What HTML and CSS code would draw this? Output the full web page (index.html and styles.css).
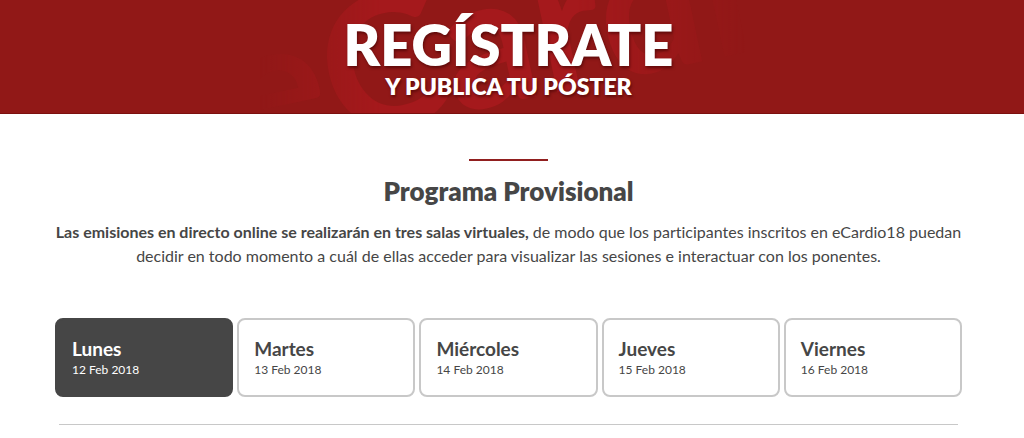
FILE: index.html
```html
<!DOCTYPE html>
<html lang="es">
<head>
<meta charset="utf-8">
<meta name="viewport" content="width=device-width, initial-scale=1">
<title>eCardio18 - Programa Provisional</title>
<link rel="stylesheet" href="styles.css">
</head>
<body>
<a class="banner" href="#registro">
  <svg class="banner-art" viewBox="0 0 1024 114" preserveAspectRatio="xMidYMid slice" aria-hidden="true">
    <defs>
      <linearGradient id="shade" x1="260" x2="745" y1="0" y2="0" gradientUnits="userSpaceOnUse">
        <stop offset="0" stop-color="#000"/>
        <stop offset=".12" stop-color="#777"/>
        <stop offset=".25" stop-color="#fff"/>
        <stop offset=".65" stop-color="#fff"/>
        <stop offset="1" stop-color="#000"/>
      </linearGradient>
      <mask id="reveal" maskUnits="userSpaceOnUse" x="0" y="0" width="1024" height="114">
        <rect width="1024" height="114" fill="url(#shade)"/>
      </mask>
    </defs>
    <g mask="url(#reveal)"><text class="banner-mark" transform="translate(240 160) rotate(-12)">eCardio</text></g>
  </svg>
  <span class="banner-title">REGÍSTRATE</span>
  <span class="banner-subtitle">Y PUBLICA TU PÓSTER</span>
</a>
<main class="program">
  <h1 class="program-title">Programa Provisional</h1>
  <p class="program-intro"><strong>Las emisiones en directo online se realizarán en tres salas virtuales,</strong> de modo que los participantes inscritos en eCardio18 puedan decidir en todo momento a cuál de ellas acceder para visualizar las sesiones e interactuar con los ponentes.</p>
  <nav class="days" aria-label="Días del programa">
    <button class="day day-active" type="button"><span class="day-name">Lunes</span><span class="day-date">12 Feb 2018</span></button>
    <button class="day" type="button"><span class="day-name">Martes</span><span class="day-date">13 Feb 2018</span></button>
    <button class="day" type="button"><span class="day-name">Miércoles</span><span class="day-date">14 Feb 2018</span></button>
    <button class="day" type="button"><span class="day-name">Jueves</span><span class="day-date">15 Feb 2018</span></button>
    <button class="day" type="button"><span class="day-name">Viernes</span><span class="day-date">16 Feb 2018</span></button>
  </nav>
  <hr class="divider">
</main>
</body>
</html>
```
FILE: styles.css
```css
* {
  box-sizing: border-box;
}

body {
  margin: 0;
  background: #fff;
  color: #464646;
  font-family: Lato, "Open Sans", sans-serif;
  font-variant-ligatures: none;
}

.banner {
  position: relative;
  display: flex;
  flex-direction: column;
  align-items: center;
  padding: 16px 7px 14px 0;
  overflow: hidden;
  background: #911817;
  border-bottom: 1px solid #7c100f;
  color: #fff;
  font-weight: 800;
  text-decoration: none;
  text-shadow: 1px 2px 3px rgba(60, 0, 0, 0.6);
}

.banner-art {
  position: absolute;
  inset: 0;
  width: 100%;
  height: 100%;
}

.banner-mark {
  fill: #a5191c;
  font-size: 184px;
  font-weight: 700;
  text-shadow: none;
}

.banner-title,
.banner-subtitle {
  position: relative;
}

.banner-title {
  font-size: 56px;
  line-height: 57px;
}

.banner-subtitle {
  font-size: 23px;
  line-height: 26px;
}

.program {
  padding: 45px 62px 0 55px;
}

.program-title {
  margin: 0;
  font-size: 26px;
  font-weight: 800;
  line-height: 32px;
  text-align: center;
}

.program-title::before {
  content: "";
  display: block;
  width: 79px;
  height: 2px;
  margin: 0 auto 14px;
  background: #911f1f;
}

.program-intro {
  margin: 13px 0 0;
  font-size: 16px;
  line-height: 24px;
  text-align: center;
}

.days {
  display: grid;
  grid-template-columns: repeat(5, 1fr);
  gap: 4px;
  margin-top: 50px;
}

.day {
  display: flex;
  flex-direction: column;
  padding: 16px 15px;
  border: 2px solid #c8c8c8;
  border-radius: 8px;
  background: #fff;
  color: #464646;
  font-family: inherit;
  text-align: left;
  cursor: pointer;
}

.day-active {
  border-color: #464646;
  background: #464646;
  color: #fff;
}

.day-name {
  font-size: 19px;
  font-weight: 700;
  line-height: 25px;
}

.day-date {
  font-size: 12px;
  line-height: 18px;
}

.divider {
  height: 1px;
  margin: 27px 4px 0;
  border: 0;
  background: #c8c8c8;
}
```
